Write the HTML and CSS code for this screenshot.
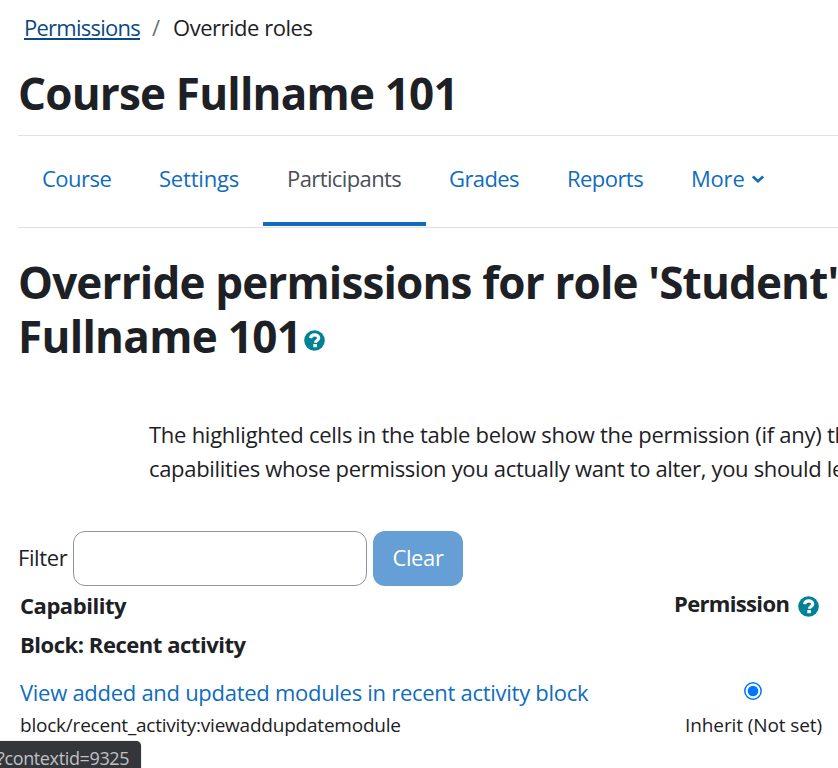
FILE: index.html
```html
<!DOCTYPE html>
<html lang="en">
<head>
<meta charset="utf-8">
<title>Override roles</title>
<link rel="stylesheet" href="styles.css">
</head>
<body>
<svg class="defs" width="0" height="0" aria-hidden="true">
  <symbol id="help" viewBox="0 0 21 21">
    <circle cx="10.5" cy="10.5" r="10.3" fill="#008196"/>
    <path d="M6.5 8.100C7.100 5.700 8.600 4.900 10.700 4.900c2.200 0 4 1.200 4 3.100 0 2.400-3.200 2.500-3.200 4.700" fill="none" stroke="#fff" stroke-width="3.200"/>
    <rect x="9.300" y="14" width="3.600" height="3.200" fill="#fff"/>
  </symbol>
</svg>
<div class="page">
  <nav class="breadcrumb">
    <a class="crumb-link" href="#">Permissions</a><span class="slash">/</span><span class="crumb-current">Override roles</span>
  </nav>
  <h1 class="title">Course Fullname 101</h1>
  <nav class="tabs">
    <a class="tab course" href="#">Course</a>
    <a class="tab settings" href="#">Settings</a>
    <a class="tab participants active" href="#">Participants</a>
    <a class="tab grades" href="#">Grades</a>
    <a class="tab reports" href="#">Reports</a>
    <a class="tab more" href="#">More<svg class="chevron" width="14" height="10" viewBox="0 0 14 10"><path d="M1.800 2.400L7 7.200l5.200-4.800" fill="none" stroke="#0f6cbf" stroke-width="2.700"/></svg></a>
  </nav>
  <h2 class="heading"><span class="line">Override permissions for role 'Student'</span><span class="line second">Fullname 101<svg class="heading-help" width="21" height="21"><use href="#help"/></svg></span></h2>
  <div class="intro"><div>The highlighted cells in the table below show the permission (if any) that</div><div class="intro-second">capabilities whose permission you actually want to alter, you should leave</div></div>
  <div class="filter">
    <label class="filter-label" for="q">Filter</label>
    <input class="filter-input" id="q" type="text">
    <button class="clear" type="button">Clear</button>
  </div>
  <div class="table">
    <div class="capabilities">
      <div class="th">Capability</div>
      <div class="group">Block: Recent activity</div>
      <a class="cap-link" href="#">View added and updated modules in recent activity block</a>
      <div class="cap-name">block/recent_activity:viewaddupdatemodule</div>
    </div>
    <div class="permissions">
      <div class="perm-head"><span class="perm-label">Permission</span><svg class="perm-help" width="21" height="21"><use href="#help"/></svg></div>
      <svg class="radio" width="18" height="18" viewBox="0 0 18 18"><circle cx="9" cy="9" r="8.200" fill="#fff" stroke="#0075ff" stroke-width="1.500"/><circle cx="9" cy="9" r="5.300" fill="#0075ff"/></svg>
      <div class="inherit">Inherit (Not set)</div>
    </div>
  </div>
</div>
<div class="status">?contextid=9325</div>
</body>
</html>
```
FILE: styles.css
```css
* { box-sizing: border-box; }
html, body { height: 100%; overflow: hidden; }
body {
  margin: 0;
  background: #fff;
  color: #1d2125;
  font: 22px/34px "Open Sans", "Noto Sans", sans-serif;
  letter-spacing: -0.28px;
}
a { color: #0f6cbf; text-decoration: none; }
.defs { position: absolute; }
.page { height: 768px; padding: 10px 0 0 18px; overflow: hidden; white-space: nowrap; }

.breadcrumb { display: flex; height: 34px; padding-left: 6px; }
.crumb-link {
  height: 30px;
  width: 116px;
  border-bottom: 2px solid #0a4a83;
  color: #0a4a83;
  letter-spacing: -0.75px;
}
.slash { width: 33px; padding-left: 12px; color: #6a737b; }
.crumb-current { letter-spacing: -0.48px; }

.title { margin: 22px 0 0; font-size: 44px; line-height: 54px; font-weight: 700; letter-spacing: -0.8px; }

.tabs {
  display: flex;
  height: 93px;
  margin-top: 15px;
  border-top: 1px solid #dee2e6;
  border-bottom: 1px solid #dee2e6;
}
.tab { height: 90px; padding: 25px 0 0 24px; letter-spacing: -0.5px; }
.course { width: 117px; }
.settings { width: 128px; letter-spacing: -0.2px; }
.participants { width: 163px; letter-spacing: -0.6px; }
.grades { width: 118px; padding-left: 23px; letter-spacing: -0.6px; }
.reports { width: 124px; padding-left: 23px; letter-spacing: -0.55px; }
.more { padding-left: 23px; letter-spacing: -0.2px; }
.active { border-bottom: 4px solid #0f6cbf; color: #495057; }
.chevron { margin-left: 6px; vertical-align: 3px; }

.heading { margin: 27px 0 0; font-size: 44px; line-height: 54px; font-weight: 700; letter-spacing: -0.84px; }
.line { display: block; height: 54px; }
.second { letter-spacing: -0.7px; }
.heading-help { margin-left: 3px; vertical-align: 2px; }

.intro { margin: 54px 0 0 131px; letter-spacing: -0.26px; }
.intro-second { letter-spacing: -0.33px; }

.filter { display: flex; align-items: center; height: 55px; margin-top: 46px; }
.filter-label { width: 55px; padding-bottom: 3px; letter-spacing: -0.4px; }
.filter-input { width: 294px; height: 55px; border: 1px solid #8f959e; border-radius: 12px; background: #fff; }
.clear {
  width: 90px;
  height: 55px;
  margin-left: 6px;
  padding: 0 0 4px;
  border: 0;
  border-radius: 12px;
  background: #659fd6;
  color: #fff;
  font: inherit;
  letter-spacing: -0.4px;
}

.table { display: grid; grid-template-columns: 650px 170px; padding-top: 2px; }
.capabilities { padding-left: 2px; }
.th, .group { height: 39px; font-weight: 700; letter-spacing: -0.46px; }
.cap-link { display: block; margin-top: 9px; height: 33px; }
.cap-name { font-size: 19px; letter-spacing: -0.22px; }
.perm-head { display: flex; align-items: center; height: 30px; padding-left: 6px; font-weight: 700; }
.perm-label { width: 124px; letter-spacing: -0.66px; }
.perm-help { margin-top: 6px; }
.radio { display: block; margin: 64px 0 0 76px; }
.inherit { margin: 8px 0 0 17px; font-size: 19px; letter-spacing: -0.1px; }

.status {
  position: absolute;
  left: 0;
  bottom: 0;
  width: 141px;
  height: 27px;
  overflow: hidden;
  border-radius: 0 5px 0 0;
  background: #35363a;
  box-shadow: 0 0 1px #555;
  color: #bdc1c6;
  font-size: 18px;
  line-height: 35px;
  text-indent: -3px;
  letter-spacing: -0.36px;
  white-space: nowrap;
}
```
